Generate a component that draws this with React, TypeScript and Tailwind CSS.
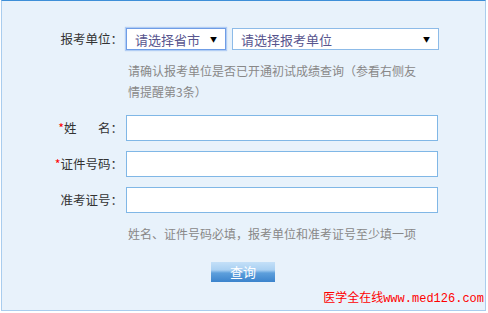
import React from 'react';

const cjk = "font-['Noto_Sans_CJK_SC','Noto_Sans',sans-serif]";

function FakeSelect({ text, width, focused }: { text: string; width: string; focused?: boolean }) {
  return (
    <div
      className={`${width} h-[22px] bg-white flex items-center justify-between pl-[8px] pr-[8px] border ${
        focused ? 'border-[#6f9de6] shadow-[0_0_1px_1px_rgba(140,180,240,0.6)]' : 'border-[#8dbbe8]'
      }`}
    >
      <span className="text-[13px] leading-none text-[#58558e]">{text}</span>
      <span className="text-[7px] leading-none text-black">▼</span>
    </div>
  );
}

function FieldRow({ label, required, children }: { label: React.ReactNode; required?: boolean; children: React.ReactNode }) {
  return (
    <div className="flex items-center">
      <div className="w-[121px] flex justify-end items-center text-[12.5px] text-[#333] leading-none">
        {required && <span className="text-[#ff0000]">*</span>}
        {label}
      </div>
      <div className="ml-[3px]">{children}</div>
    </div>
  );
}

export default function App() {
  return (
    <div className={`w-[488px] h-[313px] bg-white ${cjk}`}>
      <div className="ml-px w-[485px] h-[311px] relative bg-[#e8f2fb] border border-[#a9cdee] border-t-[#3d8fd8]">
        <div className="pt-[27px]">
          {/* 报考单位 */}
          <FieldRow label="报考单位：">
            <div className="flex gap-[6px]">
              <FakeSelect text="请选择省市" width="w-[100px]" focused />
              <FakeSelect text="请选择报考单位" width="w-[207px]" />
            </div>
          </FieldRow>

          <p className="ml-[126px] mt-[10px] w-[290px] text-[12px] leading-[21px] text-[#888]">
            请确认报考单位是否已开通初试成绩查询（参看右侧友情提醒第3条）
          </p>

          <div className="mt-[13px] flex flex-col gap-[10px]">
            <FieldRow
              required
              label={
                <span className="flex w-[59px] justify-between">
                  <span>姓</span>
                  <span>名：</span>
                </span>
              }
            >
              <input className="w-[312px] h-[26px] bg-white border border-[#80b7e6] outline-none" />
            </FieldRow>
            <FieldRow required label="证件号码：">
              <input className="w-[312px] h-[26px] bg-white border border-[#80b7e6] outline-none" />
            </FieldRow>
            <FieldRow label="准考证号：">
              <input className="w-[312px] h-[26px] bg-white border border-[#80b7e6] outline-none" />
            </FieldRow>
          </div>

          <p className="ml-[126px] mt-[10px] text-[12px] leading-[21px] text-[#888]">
            姓名、证件号码必填，报考单位和准考证号至少填一项
          </p>

          <div className="mt-[14px] ml-[209px]">
            <button className="w-[64px] h-[20px] bg-[linear-gradient(to_bottom,#c4e0f8_0%,#a9d0f2_40%,#5d9fdc_55%,#3b83cc_100%)] text-white text-[13px] leading-none">
              查询
            </button>
          </div>
        </div>

        {/* watermark */}
        <div className="absolute right-[1px] bottom-[5px] flex items-baseline text-[#ff0000] leading-none">
          <span className="text-[12px]">医学全在线</span>
          <span className="text-[12px] font-['Liberation_Mono',monospace]">www.med126.com</span>
        </div>
      </div>
    </div>
  );
}
